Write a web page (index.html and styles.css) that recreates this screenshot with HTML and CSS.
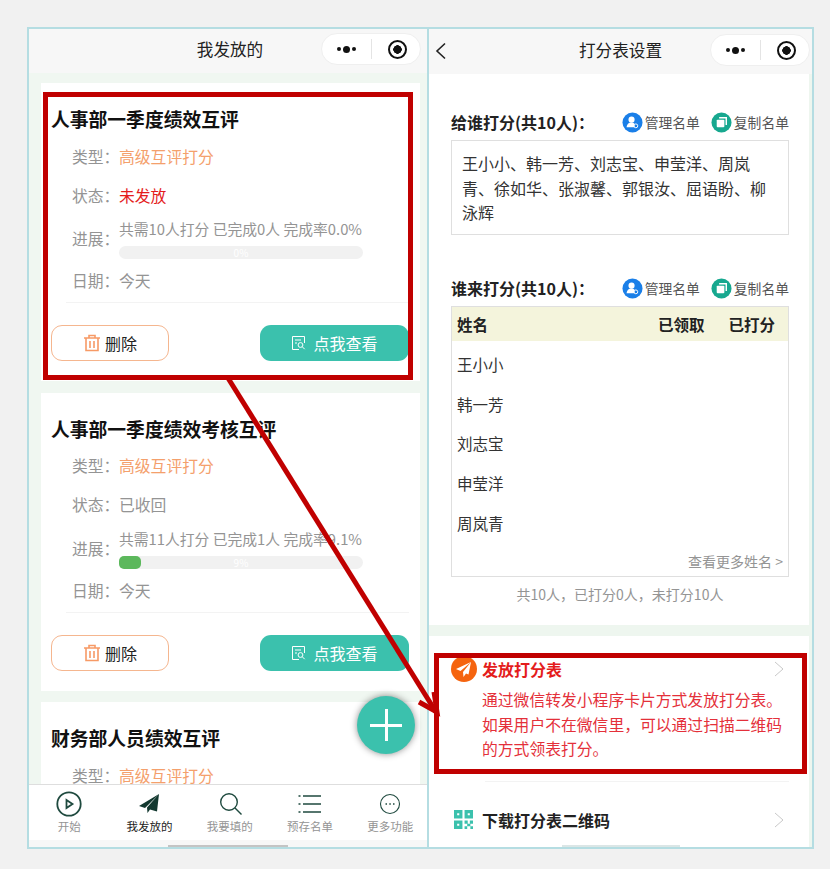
FILE: index.html
```html
<!DOCTYPE html>
<html lang="zh-CN">
<head>
    <meta charset="UTF-8">
    <meta name="viewport" content="width=device-width, initial-scale=1.0">
    <title>打分表设置</title>
    <link rel="stylesheet" href="styles.css">
</head>
<body>

<svg width="0" height="0" class="iconDefs">
    <symbol id="trash" viewBox="0 0 18 18">
        <path d="M1 4h16M6 4V1.500h6V4M3 4v12.500h12V4M7 7v7M11 7v7" fill="none" stroke="#f79a66" stroke-width="1.600"/>
    </symbol>
    <symbol id="doc" viewBox="0 0 16 16">
        <path d="M8 14.500H1.500v-13h12V8M4 5h6M4 8h2" fill="none" stroke="#fff" stroke-width="1"/>
        <circle cx="9.500" cy="10" r="2.400" fill="none" stroke="#fff"/>
        <path d="M11.300 11.800l2.400 2.400" stroke="#fff"/>
    </symbol>
    <symbol id="manage" viewBox="0 0 22 22">
        <circle cx="11" cy="11" r="10.500" fill="#1a7fe8"/>
        <circle cx="10" cy="8" r="3.200" fill="#fff"/>
        <path d="M4.800 16c.4-3.600 2.700-5 5.200-5 1.300 0 2.300.3 3 1v4z" fill="#fff"/>
        <circle cx="14.500" cy="14.500" r="2" fill="none" stroke="#fff" stroke-width="1"/>
    </symbol>
    <symbol id="copy" viewBox="0 0 22 22">
        <circle cx="11" cy="11" r="10.500" fill="#17a88f"/>
        <rect x="6" y="8" width="8" height="8" rx="1" fill="#fff"/>
        <path d="M8.500 6h7.500v7.500" fill="none" stroke="#fff" stroke-width="1.500"/>
    </symbol>
    <symbol id="chevron" viewBox="0 0 10 16">
        <path d="M1 1l8 7-8 7" fill="none" stroke="#c9c9c9" stroke-width="1"/>
    </symbol>
</svg>

<div class="frame">
    <section class="phone phoneLeft">
        <header class="navBar">
            <span class="navTitle">我发放的</span>
            <div class="capsule"><span class="dots"><i></i><b></b><i></i></span><span class="capsuleLine"></span><span class="target"></span></div>
        </header>

        <div class="cardList">
            <article class="card">
                <h2 class="cardTitle">人事部一季度绩效互评</h2>
                <div class="metaRow"><span class="metaLabel">类型：</span><span class="orange">高级互评打分</span></div>
                <div class="metaRow"><span class="metaLabel">状态：</span><span class="red">未发放</span></div>
                <div class="metaRow progressRow">
                    <span class="metaLabel">进展：</span>
                    <div class="progressInfo">
                        <div class="progressText">共需10人打分 已完成0人 完成率0.0%</div>
                        <div class="progressBar"><span class="progressPct">0%</span></div>
                    </div>
                </div>
                <div class="metaRow dateRow"><span class="metaLabel">日期：</span><span>今天</span></div>
                <div class="cardActions">
                    <div class="btnDelete"><svg class="btnIcon"><use href="#trash"/></svg>删除</div>
                    <div class="btnView"><svg class="btnIconSmall"><use href="#doc"/></svg>点我查看</div>
                </div>
            </article>

            <article class="card">
                <h2 class="cardTitle">人事部一季度绩效考核互评</h2>
                <div class="metaRow"><span class="metaLabel">类型：</span><span class="orange">高级互评打分</span></div>
                <div class="metaRow"><span class="metaLabel">状态：</span><span>已收回</span></div>
                <div class="metaRow progressRow">
                    <span class="metaLabel">进展：</span>
                    <div class="progressInfo">
                        <div class="progressText">共需11人打分 已完成1人 完成率9.1%</div>
                        <div class="progressBar"><div class="progressFill" style="width: 9.1%"></div><span class="progressPct">9%</span></div>
                    </div>
                </div>
                <div class="metaRow dateRow"><span class="metaLabel">日期：</span><span>今天</span></div>
                <div class="cardActions">
                    <div class="btnDelete"><svg class="btnIcon"><use href="#trash"/></svg>删除</div>
                    <div class="btnView"><svg class="btnIconSmall"><use href="#doc"/></svg>点我查看</div>
                </div>
            </article>

            <article class="card">
                <h2 class="cardTitle">财务部人员绩效互评</h2>
                <div class="metaRow"><span class="metaLabel">类型：</span><span class="orange">高级互评打分</span></div>
            </article>
        </div>

        <div class="fab"></div>

        <nav class="tabBar">
            <div class="tabItem">
                <svg class="tabIcon" viewBox="0 0 26 26"><circle cx="13" cy="13" r="11.700" fill="none" stroke="#1f4a3f" stroke-width="1.800"/><path d="M10.500 9l6 4-6 4z" fill="none" stroke="#1f4a3f" stroke-width="1.800"/></svg>
                <span>开始</span>
            </div>
            <div class="tabItem tabActive">
                <svg class="tabIcon" viewBox="0 0 26 26"><path d="M23 3L3 15l6 2zM23 3L11 16.500l.5 5.500 2.500-3.500 7 2z" fill="#12382f"/></svg>
                <span>我发放的</span>
            </div>
            <div class="tabItem">
                <svg class="tabIcon" viewBox="0 0 26 26"><circle cx="12" cy="11" r="8.300" fill="none" stroke="#1f4a3f" stroke-width="1.400"/><path d="M18 17l6.500 6.500" stroke="#1f4a3f" stroke-width="1.400"/></svg>
                <span>我要填的</span>
            </div>
            <div class="tabItem">
                <svg class="tabIcon" viewBox="0 0 26 26"><path d="M6 5h18M6 13h18M6 21h18" stroke="#1f4a3f" stroke-width="1.600"/><path d="M1.500 5h2M1.500 13h2M1.500 21h2" stroke="#1f4a3f" stroke-width="1.600"/></svg>
                <span>预存名单</span>
            </div>
            <div class="tabItem">
                <svg class="tabIcon" viewBox="0 0 26 26"><circle cx="13" cy="13" r="9.500" fill="none" stroke="#1f4a3f" stroke-width="1.100"/><path d="M8.500 13h1.500M12.300 13h1.500M16 13h1.500" stroke="#1f4a3f" stroke-width="1.300"/></svg>
                <span>更多功能</span>
            </div>
        </nav>
        <div class="homeArea"><span class="homeBar"></span></div>
    </section>

    <section class="phone phoneRight">
        <header class="navBar">
            <svg class="backIcon" viewBox="0 0 12 18"><path d="M10 1.500L2 9l8 7.500" fill="none" stroke="#222" stroke-width="1.600"/></svg>
            <span class="navTitle">打分表设置</span>
            <div class="capsule"><span class="dots"><i></i><b></b><i></i></span><span class="capsuleLine"></span><span class="target"></span></div>
        </header>

        <div class="settingsTop">
            <div class="sectionHead">
                <span class="sectionTitle">给谁打分(共10人)：</span>
                <span class="headLink"><svg class="linkIcon"><use href="#manage"/></svg>管理名单</span>
                <span class="headLink"><svg class="linkIcon"><use href="#copy"/></svg>复制名单</span>
            </div>
            <div class="nameBox">王小小、韩一芳、刘志宝、申莹洋、周岚青、徐如华、张淑馨、郭银汝、屈语盼、柳泳辉</div>

            <div class="sectionHead sectionHeadSecond">
                <span class="sectionTitle">谁来打分(共10人)：</span>
                <span class="headLink"><svg class="linkIcon"><use href="#manage"/></svg>管理名单</span>
                <span class="headLink"><svg class="linkIcon"><use href="#copy"/></svg>复制名单</span>
            </div>
            <div class="scoreTable">
                <div class="tableHead"><span class="colName">姓名</span><span class="colNum">已领取</span><span class="colNum">已打分</span></div>
                <div class="tableRow">王小小</div>
                <div class="tableRow">韩一芳</div>
                <div class="tableRow">刘志宝</div>
                <div class="tableRow">申莹洋</div>
                <div class="tableRow">周岚青</div>
                <div class="tableMore">查看更多姓名 &gt;</div>
            </div>
            <div class="tableSummary">共10人，已打分0人，未打分10人</div>
        </div>

        <div class="settingsBottom">
            <div class="actionItem actionSend">
                <div class="actionHead">
                    <svg class="actionIcon" viewBox="0 0 26 26"><circle cx="13" cy="13" r="13" fill="#f5640f"/><path d="M20 6L5 13l4.500 2zM20 6l-8 10 .5 5 2.500-3.500 2.500 1z" fill="#fff"/></svg>
                    <span class="actionTitle">发放打分表</span>
                    <svg class="chevron"><use href="#chevron"/></svg>
                </div>
                <p class="actionDesc">通过微信转发小程序卡片方式发放打分表。如果用户不在微信里，可以通过扫描二维码的方式领表打分。</p>
            </div>
            <div class="actionItem actionQr">
                <div class="actionHead">
                    <svg class="qrIcon" viewBox="0 0 18 18"><path d="M0 0h8v8H0zM3 3v2h2V3zM10 0h8v8h-8zM13 3v2h2V3zM0 10h8v8H0zM3 13v2h2v-2z" fill="#3bc1ad" fill-rule="evenodd"/><path d="M10 10h3v3h-3zM15 10h3v3h-3zM12.500 13h3v2.500h-3zM10 15.500h2.500V18H10zM15.500 15.500H18V18h-2.500z" fill="#3bc1ad"/></svg>
                    <span class="actionTitle qrTitle">下载打分表二维码</span>
                    <svg class="chevron"><use href="#chevron"/></svg>
                </div>
            </div>
            <div class="homeBarRight"></div>
        </div>
    </section>
</div>

<!-- red callouts drawn on top of the two phones -->
<div class="callout calloutLeft"></div>
<div class="callout calloutRight"></div>
<svg class="calloutArrow" width="830" height="869" viewBox="0 0 830 869">
    <path d="M228 378L436 712" stroke="#c00000" stroke-width="5" fill="none"/>
    <path d="M419 702L437 712 434 692" stroke="#c00000" stroke-width="5" fill="none"/>
</svg>

</body>
</html>
```

FILE: styles.css
```css
* {
    box-sizing: border-box;
}
body {
    margin: 0;
    height: 869px;
    padding: 27px 16px 20px 27px;
    background-color: #f1f1f1;
    font-family: "Noto Sans CJK SC", "Liberation Sans", sans-serif;
    color: #949494;
    overflow: hidden;
}
.iconDefs {
    position: absolute;
}
.frame {
    display: flex;
    width: 787px;
    height: 822px;
    border: 2px solid #b5dde2;
    background: #fff;
}
.phone {
    position: relative;
    display: flex;
    flex-direction: column;
    overflow: hidden;
}
.phoneLeft {
    width: 400px;
    background-color: #f0f7f1;
    border-right: 2px solid #b5dde2;
}
.phoneRight {
    flex: 1;
    background-color: #eef6ef;
}

/* nav bar */
.navBar {
    position: relative;
    flex: none;
    height: 44px;
    padding: 0 0 4px 4px;
    background-color: #f7f7f7;
    display: flex;
    align-items: center;
    justify-content: center;
}
.phoneRight .navBar {
    height: 45px;
    padding-left: 0;
}
.navTitle {
    font-size: 16.600px;
    color: #222;
}
.capsule {
    position: absolute;
    top: 4px;
    right: 6px;
    width: 100px;
    height: 32px;
    display: flex;
    align-items: center;
    padding-left: 15px;
    background: #fff;
    border: 1px solid #efefef;
    border-radius: 16px;
}
.phoneRight .capsule {
    top: 5px;
    right: 2px;
}
.dots {
    display: flex;
    align-items: center;
    gap: 2px;
    width: 20px;
}
.dots i {
    width: 4px;
    height: 4px;
    border-radius: 50%;
    background: #111;
}
.dots b {
    width: 7px;
    height: 7px;
    border-radius: 50%;
    background: #111;
}
.capsuleLine {
    width: 1px;
    height: 20px;
    margin-left: 14px;
    background: #e4e4e4;
}
.target {
    width: 19px;
    height: 19px;
    margin-left: 16px;
    border: 2.500px solid #111;
    border-radius: 50%;
    background: radial-gradient(circle, #111 0 4px, #fff 4.500px);
}
.backIcon {
    position: absolute;
    left: 6px;
    top: 13px;
    width: 12px;
    height: 18px;
}

/* left list */
.cardList {
    flex: 1;
    min-height: 0;
    overflow: hidden;
    padding: 10px 7px 0 12px;
}
.card {
    background: #fff;
    height: 298px;
    margin-bottom: 11.500px;
    padding: 22px 11px 0 10px;
}
.cardTitle {
    margin: 0 0 4px;
    font-size: 18.800px;
    line-height: 28px;
    font-weight: 700;
    color: #111;
}
.metaRow {
    display: flex;
    align-items: center;
    height: 39px;
    padding-left: 21px;
    font-size: 15.800px;
    line-height: 18px;
    white-space: nowrap;
}
.metaLabel {
    width: 47px;
    flex: none;
}
.orange {
    color: #f4a06c;
}
.red {
    color: #e41c1c;
}
.progressRow {
    height: 46px;
    padding-top: 2px;
}
.progressInfo {
    width: 244px;
}
.progressText {
    font-size: 14.800px;
    line-height: 20px;
}
.progressBar {
    position: relative;
    height: 13px;
    margin-top: 7px;
    background: #f1f1f1;
    border-radius: 7px;
}
.progressFill {
    height: 100%;
    background: #5cb85c;
    border-radius: 5px;
}
.progressPct {
    position: absolute;
    left: 0;
    right: 0;
    top: 0;
    text-align: center;
    font-size: 10px;
    line-height: 13px;
    color: #fff;
}
.dateRow {
    height: 42px;
    margin-left: 15px;
    padding-left: 6px;
    padding-bottom: 1px;
    border-bottom: 1px solid #f3f3f3;
}
.cardActions {
    display: flex;
    justify-content: space-between;
    margin-top: 22px;
}
.btnDelete,
.btnView {
    display: flex;
    align-items: center;
    justify-content: center;
    height: 36px;
    border-radius: 11px;
    font-size: 16px;
}
.btnDelete {
    width: 118px;
    border: 1px solid #f5b68f;
    color: #222;
}
.btnView {
    width: 149px;
    background-color: #3bc1ad;
    color: #fff;
}
.btnIcon {
    width: 18px;
    height: 18px;
    margin-right: 4px;
}
.btnIconSmall {
    width: 16px;
    height: 16px;
    margin-right: 6px;
}
.fab {
    position: absolute;
    left: 328px;
    top: 667px;
    width: 58px;
    height: 58px;
    border-radius: 50%;
    background:
        linear-gradient(#fff, #fff) center / 32px 3px no-repeat,
        linear-gradient(#fff, #fff) center / 3px 32px no-repeat,
        #3bc1ad;
    box-shadow: 0 0 7px rgba(0, 0, 0, 0.45);
}

/* tab bar */
.tabBar {
    flex: none;
    height: 56px;
    display: flex;
    background: #fff;
    border-top: 1px solid #dedede;
}
.tabItem {
    flex: none;
    width: 80.300px;
    display: flex;
    flex-direction: column;
    align-items: center;
    padding-top: 6px;
    font-size: 11.500px;
    line-height: 16px;
    color: #949494;
    white-space: nowrap;
}
.tabActive {
    color: #222;
}
.tabIcon {
    width: 26px;
    height: 26px;
    margin-bottom: 1px;
}
.homeArea {
    flex: none;
    height: 7px;
    background: #f7f7f7;
    display: flex;
    justify-content: center;
    align-items: flex-end;
}
.homeBar {
    width: 120px;
    height: 2px;
    background: #c4c4c4;
}

/* right settings */
.settingsTop {
    flex: none;
    height: 551px;
    margin-right: 3px;
    padding: 35px 20px 0 22px;
    background: #fff;
}
.sectionHead {
    display: flex;
    align-items: center;
    height: 26px;
    margin-bottom: 5px;
}
.sectionHeadSecond {
    margin-top: 40px;
}
.sectionTitle {
    flex: 1;
    font-size: 16px;
    font-weight: 700;
    color: #222;
}
.headLink {
    display: flex;
    align-items: center;
    margin-left: 11px;
    font-size: 13.800px;
    color: #555;
}
.linkIcon {
    width: 21px;
    height: 21px;
    margin-right: 2px;
}
.nameBox {
    height: 95px;
    padding: 10px 10px 0;
    border: 1px solid #dfdfdf;
    font-size: 16px;
    line-height: 24.500px;
    color: #333;
}
.scoreTable {
    height: 271px;
    border: 1px solid #dfdfdf;
}
.tableHead {
    display: flex;
    align-items: center;
    height: 34px;
    padding: 0 13px 0 5px;
    background-color: #f4f4dc;
    font-size: 15.500px;
    font-weight: 700;
    color: #222;
}
.colName {
    flex: 1;
}
.colNum {
    margin-left: 24px;
}
.tableRow {
    display: flex;
    align-items: center;
    height: 39.800px;
    padding-left: 5px;
    font-size: 15.500px;
    color: #333;
}
.tableHead + .tableRow {
    margin-top: 3px;
}
.tableMore {
    margin-top: 8px;
    padding-right: 5px;
    text-align: right;
    font-size: 14px;
    line-height: 20px;
}
.tableSummary {
    margin-top: 7px;
    text-align: center;
    font-size: 14px;
    line-height: 20px;
}
.settingsBottom {
    position: relative;
    flex: 1;
    margin-top: 11px;
    margin-right: 3px;
    background: #fff;
    padding-left: 22px;
}
.actionItem {
    padding-right: 20px;
}
.actionSend {
    padding-top: 20px;
    padding-bottom: 19px;
}
.actionHead {
    display: flex;
    align-items: center;
    height: 26px;
}
.actionIcon {
    width: 26px;
    height: 26px;
    margin-right: 5px;
}
.qrIcon {
    width: 19px;
    height: 19px;
    margin: 0 9px 0 3px;
}
.actionTitle {
    flex: 1;
    font-size: 16px;
    font-weight: 700;
    color: #e41c1c;
}
.qrTitle {
    color: #222;
}
.chevron {
    width: 10px;
    height: 16px;
    margin-right: 5px;
}
.actionDesc {
    margin: 6px 0 0 31px;
    font-size: 15.800px;
    line-height: 24.500px;
    color: #e4303a;
}
.actionQr {
    position: relative;
    padding-top: 26px;
}
.actionQr::before {
    content: "";
    position: absolute;
    top: 0;
    left: 34px;
    right: 20px;
    height: 1px;
    background: #f3f3f3;
}
.homeBarRight {
    position: absolute;
    left: 133px;
    bottom: 0;
    width: 118px;
    height: 2px;
    background: #dbe6e6;
}

/* callouts */
.callout {
    position: absolute;
    border: 5px solid #c00000;
}
.calloutLeft {
    left: 43px;
    top: 92px;
    width: 370px;
    height: 288px;
}
.calloutRight {
    left: 434px;
    top: 653px;
    width: 373px;
    height: 121px;
}
.calloutArrow {
    position: absolute;
    left: 0;
    top: 0;
    pointer-events: none;
}
```
